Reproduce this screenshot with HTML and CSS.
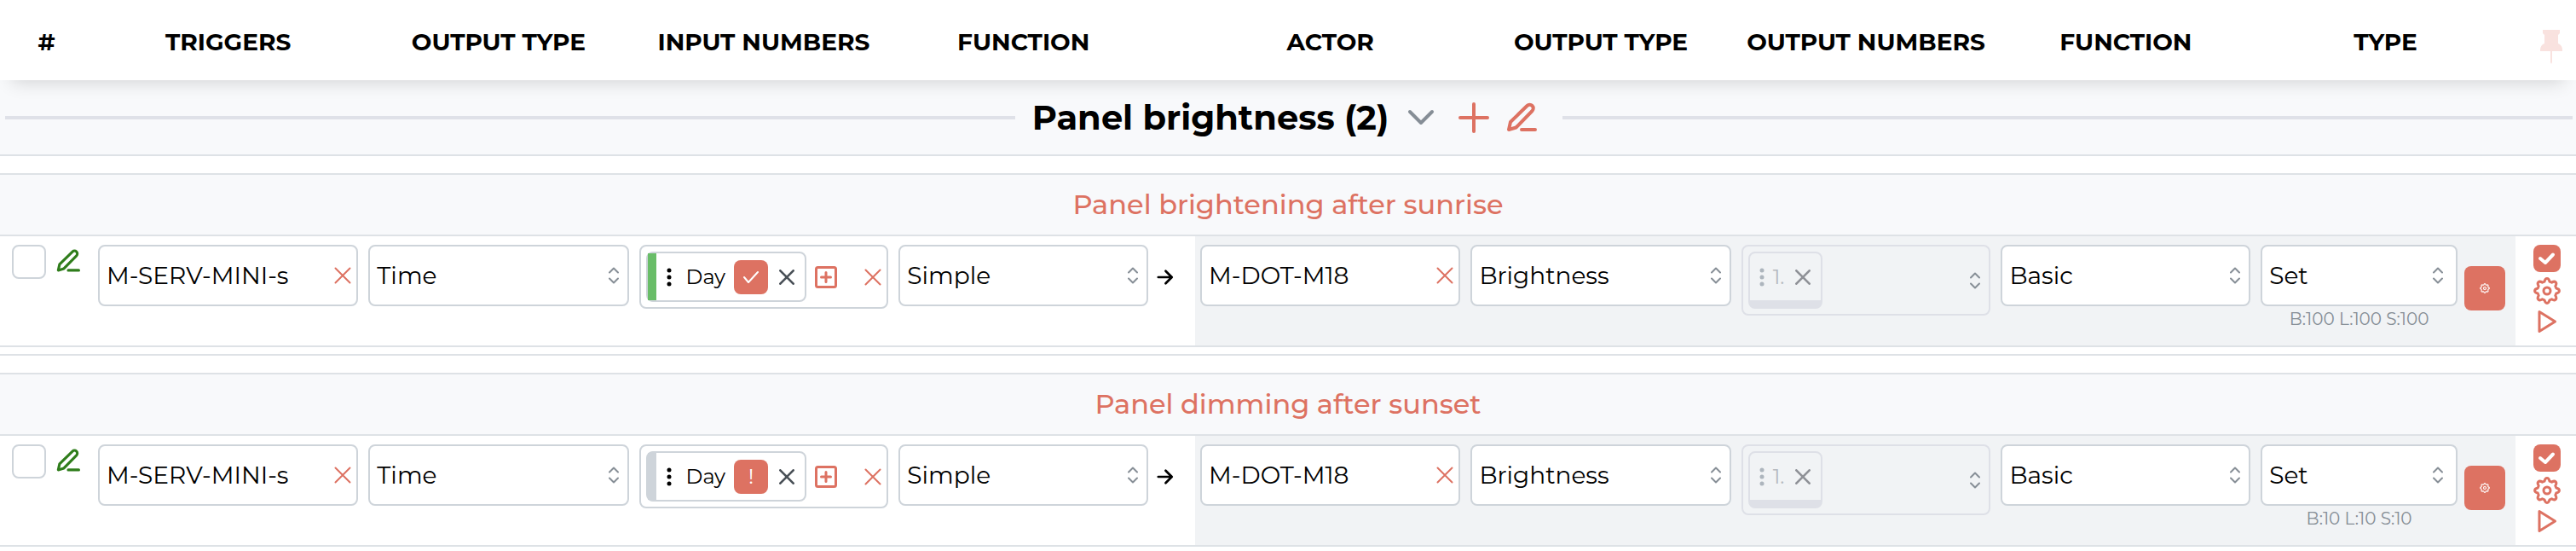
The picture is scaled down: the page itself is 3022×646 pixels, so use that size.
FILE: index.html
```
<!DOCTYPE html>
<html lang="en">
<head>
    <meta charset="UTF-8">
    <meta name="viewport" content="width=device-width, initial-scale=1.0">
    <title>Rules</title>
    <link rel="stylesheet" href="styles.css">
</head>
<body>
    <!-- Shared icons -->
    <svg class="sprite" aria-hidden="true">
        <symbol id="i-pencil" viewBox="0 0 36 36">
            <path d="M3 32l2-9L24.500 4a4.200 4.200 0 0 1 6 6L11.500 29.500z M18 32h16"/>
        </symbol>
        <symbol id="i-x" viewBox="0 0 20 20">
            <path d="M1.500 1.500l17 17M18.500 1.500l-17 17"/>
        </symbol>
        <symbol id="i-updown" viewBox="0 0 14 20">
            <path d="M2 6.500l5-5 5 5M2 13.500l5 5 5-5"/>
        </symbol>
        <symbol id="i-dots" viewBox="0 0 6 22">
            <circle cx="3" cy="3" r="2.500"/><circle cx="3" cy="11" r="2.500"/><circle cx="3" cy="19" r="2.500"/>
        </symbol>
        <symbol id="i-add-box" viewBox="0 0 26 26">
            <rect x="1.500" y="1.500" width="23" height="23" rx="2"/>
            <path d="M13 7.500v11M7.500 13h11"/>
        </symbol>
        <symbol id="i-arrow" viewBox="0 0 22 20">
            <path d="M2 10h17M11.500 2l8 8-8 8"/>
        </symbol>
        <symbol id="i-gear" viewBox="-16 -16 32 32">
            <path d="M-3-10.800C-2-15.600 2-15.600 3-10.800L5.500-9.800C9.600-12.400 12.400-9.600 9.800-5.500L10.800-3C15.600-2 15.600 2 10.800 3L9.800 5.500C12.400 9.600 9.600 12.400 5.500 9.800L3 10.800C2 15.600-2 15.600-3 10.800L-5.500 9.800C-9.600 12.400-12.400 9.600-9.800 5.500L-10.800 3C-15.600 2-15.600-2-10.800-3L-9.800-5.500C-12.400-9.600-9.600-12.400-5.500-9.800z"/>
            <circle r="4"/>
        </symbol>
        <symbol id="i-play" viewBox="0 0 32 28">
            <path d="M7 2.500v23L25.500 14z"/>
        </symbol>
    </svg>

    <table class="rules">
        <colgroup>
            <col class="col-num">
            <col class="col-wide">
            <col class="col-wide">
            <col>
            <col>
            <col class="col-arrow">
            <col class="col-wide">
            <col class="col-wide">
            <col>
            <col>
            <col>
            <col class="col-actions">
        </colgroup>
        <thead>
            <tr>
                <th>#</th>
                <th>TRIGGERS</th>
                <th>OUTPUT TYPE</th>
                <th>INPUT NUMBERS</th>
                <th>FUNCTION</th>
                <th></th>
                <th>ACTOR</th>
                <th>OUTPUT TYPE</th>
                <th>OUTPUT NUMBERS</th>
                <th>FUNCTION</th>
                <th>TYPE</th>
                <th class="pin-cell">
                    <button class="icon-btn pin" aria-label="Pin header">
                        <svg width="26" height="40" viewBox="0 0 26 40"><path d="M3 0h20v4l-2 2v10c3 1 5 4 5 7.500v1.500H0v-1.500C0 20 2 17 5 16V6L3 4z M12 25h2v13l-1 2-1-2z"/></svg>
                    </button>
                </th>
            </tr>
        </thead>
        <tbody>
            <tr class="group-row">
                <td colspan="12">
                    <div class="group">
                        <span class="line"></span>
                        <h2 class="group-title">Panel brightness (2)</h2>
                        <button class="icon-btn group-toggle" aria-label="Collapse group">
                            <svg width="32" height="20" viewBox="0 0 32 20"><path d="M3 3l13 13L29 3"/></svg>
                        </button>
                        <button class="icon-btn group-add" aria-label="Add rule">
                            <svg width="36" height="36" viewBox="0 0 36 36"><path d="M18 2v32M2 18h32"/></svg>
                        </button>
                        <button class="icon-btn group-edit" aria-label="Edit group">
                            <svg class="icon" width="36" height="36"><use href="#i-pencil"/></svg>
                        </button>
                        <span class="line"></span>
                    </div>
                </td>
            </tr>
            <tr class="spacer"><td colspan="12"></td></tr>

            <!-- Rule 1 -->
            <tr class="title-row"><td colspan="12">Panel brightening after sunrise</td></tr>
            <tr class="rule">
                <td>
                    <div class="select-cell">
                        <input type="checkbox" class="pick" aria-label="Select rule">
                        <button class="icon-btn edit" aria-label="Edit rule"><svg class="icon" width="28" height="28"><use href="#i-pencil"/></svg></button>
                    </div>
                </td>
                <td>
                    <div class="field">
                        <input type="text" value="M-SERV-MINI-s" aria-label="Trigger">
                        <button class="icon-btn clear" aria-label="Clear trigger"><svg class="icon" width="20" height="20"><use href="#i-x"/></svg></button>
                    </div>
                </td>
                <td>
                    <div class="field">
                        <select aria-label="Trigger output type"><option>Time</option></select>
                        <svg class="icon updown"><use href="#i-updown"/></svg>
                    </div>
                </td>
                <td>
                    <div class="multi">
                        <div class="chip">
                            <span class="stripe on"></span>
                            <svg class="dots"><use href="#i-dots"/></svg>
                            <span class="chip-label">Day</span>
                            <button class="chip-state" aria-label="Is day">
                                <svg width="18" height="14" viewBox="0 0 18 14"><path d="M1 7l5 6L17 1"/></svg>
                            </button>
                            <button class="icon-btn chip-x" aria-label="Remove"><svg class="icon" width="18" height="18"><use href="#i-x"/></svg></button>
                        </div>
                        <button class="icon-btn add" aria-label="Add input"><svg class="icon" width="26" height="26"><use href="#i-add-box"/></svg></button>
                        <button class="icon-btn clear" aria-label="Clear inputs"><svg class="icon" width="20" height="20"><use href="#i-x"/></svg></button>
                    </div>
                </td>
                <td>
                    <div class="field">
                        <select aria-label="Trigger function"><option>Simple</option></select>
                        <svg class="icon updown"><use href="#i-updown"/></svg>
                    </div>
                </td>
                <td class="arrow"><div><svg class="icon" width="20" height="20"><use href="#i-arrow"/></svg></div></td>
                <td class="actor">
                    <div class="field">
                        <input type="text" value="M-DOT-M18" aria-label="Actor">
                        <button class="icon-btn clear" aria-label="Clear actor"><svg class="icon" width="20" height="20"><use href="#i-x"/></svg></button>
                    </div>
                </td>
                <td class="actor">
                    <div class="field">
                        <select aria-label="Actor output type"><option>Brightness</option></select>
                        <svg class="icon updown"><use href="#i-updown"/></svg>
                    </div>
                </td>
                <td class="actor">
                    <div class="multi disabled">
                        <div class="chip">
                            <svg class="dots"><use href="#i-dots"/></svg>
                            <span class="chip-label">1.</span>
                            <button class="icon-btn chip-x" aria-label="Remove" disabled><svg class="icon" width="18" height="18"><use href="#i-x"/></svg></button>
                        </div>
                        <svg class="icon updown"><use href="#i-updown"/></svg>
                    </div>
                </td>
                <td class="actor">
                    <div class="field">
                        <select aria-label="Actor function"><option>Basic</option></select>
                        <svg class="icon updown"><use href="#i-updown"/></svg>
                    </div>
                </td>
                <td class="actor">
                    <div class="type">
                        <div class="type-main">
                            <div class="field">
                                <select aria-label="Type"><option>Set</option></select>
                                <svg class="icon updown"><use href="#i-updown"/></svg>
                            </div>
                            <div class="hint">B:100 L:100 S:100</div>
                        </div>
                        <button class="config" aria-label="Configure"><svg class="icon" width="12" height="12"><use href="#i-gear"/></svg></button>
                    </div>
                </td>
                <td>
                    <div class="actions">
                        <input type="checkbox" class="enabled" aria-label="Enabled" checked>
                        <button class="icon-btn" aria-label="Settings"><svg class="icon" width="32" height="32"><use href="#i-gear"/></svg></button>
                        <button class="icon-btn" aria-label="Run"><svg class="icon" width="32" height="28"><use href="#i-play"/></svg></button>
                    </div>
                </td>
            </tr>
            <tr class="spacer small"><td colspan="12"></td></tr>
            <tr class="spacer"><td colspan="12"></td></tr>

            <!-- Rule 2 -->
            <tr class="title-row"><td colspan="12">Panel dimming after sunset</td></tr>
            <tr class="rule">
                <td>
                    <div class="select-cell">
                        <input type="checkbox" class="pick" aria-label="Select rule">
                        <button class="icon-btn edit" aria-label="Edit rule"><svg class="icon" width="28" height="28"><use href="#i-pencil"/></svg></button>
                    </div>
                </td>
                <td>
                    <div class="field">
                        <input type="text" value="M-SERV-MINI-s" aria-label="Trigger">
                        <button class="icon-btn clear" aria-label="Clear trigger"><svg class="icon" width="20" height="20"><use href="#i-x"/></svg></button>
                    </div>
                </td>
                <td>
                    <div class="field">
                        <select aria-label="Trigger output type"><option>Time</option></select>
                        <svg class="icon updown"><use href="#i-updown"/></svg>
                    </div>
                </td>
                <td>
                    <div class="multi">
                        <div class="chip">
                            <span class="stripe"></span>
                            <svg class="dots"><use href="#i-dots"/></svg>
                            <span class="chip-label">Day</span>
                            <button class="chip-state" aria-label="Is not day">!</button>
                            <button class="icon-btn chip-x" aria-label="Remove"><svg class="icon" width="18" height="18"><use href="#i-x"/></svg></button>
                        </div>
                        <button class="icon-btn add" aria-label="Add input"><svg class="icon" width="26" height="26"><use href="#i-add-box"/></svg></button>
                        <button class="icon-btn clear" aria-label="Clear inputs"><svg class="icon" width="20" height="20"><use href="#i-x"/></svg></button>
                    </div>
                </td>
                <td>
                    <div class="field">
                        <select aria-label="Trigger function"><option>Simple</option></select>
                        <svg class="icon updown"><use href="#i-updown"/></svg>
                    </div>
                </td>
                <td class="arrow"><div><svg class="icon" width="20" height="20"><use href="#i-arrow"/></svg></div></td>
                <td class="actor">
                    <div class="field">
                        <input type="text" value="M-DOT-M18" aria-label="Actor">
                        <button class="icon-btn clear" aria-label="Clear actor"><svg class="icon" width="20" height="20"><use href="#i-x"/></svg></button>
                    </div>
                </td>
                <td class="actor">
                    <div class="field">
                        <select aria-label="Actor output type"><option>Brightness</option></select>
                        <svg class="icon updown"><use href="#i-updown"/></svg>
                    </div>
                </td>
                <td class="actor">
                    <div class="multi disabled">
                        <div class="chip">
                            <svg class="dots"><use href="#i-dots"/></svg>
                            <span class="chip-label">1.</span>
                            <button class="icon-btn chip-x" aria-label="Remove" disabled><svg class="icon" width="18" height="18"><use href="#i-x"/></svg></button>
                        </div>
                        <svg class="icon updown"><use href="#i-updown"/></svg>
                    </div>
                </td>
                <td class="actor">
                    <div class="field">
                        <select aria-label="Actor function"><option>Basic</option></select>
                        <svg class="icon updown"><use href="#i-updown"/></svg>
                    </div>
                </td>
                <td class="actor">
                    <div class="type">
                        <div class="type-main">
                            <div class="field">
                                <select aria-label="Type"><option>Set</option></select>
                                <svg class="icon updown"><use href="#i-updown"/></svg>
                            </div>
                            <div class="hint">B:10 L:10 S:10</div>
                        </div>
                        <button class="config" aria-label="Configure"><svg class="icon" width="12" height="12"><use href="#i-gear"/></svg></button>
                    </div>
                </td>
                <td>
                    <div class="actions">
                        <input type="checkbox" class="enabled" aria-label="Enabled" checked>
                        <button class="icon-btn" aria-label="Settings"><svg class="icon" width="32" height="32"><use href="#i-gear"/></svg></button>
                        <button class="icon-btn" aria-label="Run"><svg class="icon" width="32" height="28"><use href="#i-play"/></svg></button>
                    </div>
                </td>
            </tr>
        </tbody>
    </table>
</body>
</html>
```
FILE: styles.css
```
* {
    margin: 0;
    padding: 0;
    box-sizing: border-box;
}

body {
    font-family: Montserrat, Inter, sans-serif;
    font-size: 28px;
    color: #000;
    background: white;
}

button, input, select {
    font: inherit;
    color: inherit;
}

svg {
    display: block;
}

.sprite {
    display: none;
}

.icon {
    fill: none;
    stroke: currentColor;
    stroke-width: 3;
    stroke-linecap: round;
    stroke-linejoin: round;
}

.icon-btn {
    border: none;
    background: none;
    color: #dd7262;
    cursor: pointer;
    flex-shrink: 0;
}

/* Table */
.rules {
    width: 100%;
    table-layout: fixed;
    border-collapse: separate;
    border-spacing: 0;
}

.col-num { width: 109px; }
.col-wide { width: 10.5%; }
.col-arrow { width: 49px; }
.col-actions { width: 71px; }

thead {
    position: sticky;
    top: 0;
    z-index: 1;
    background: white;
    box-shadow: 0 16px 20px -14px rgba(0, 0, 0, 0.16);
}

th {
    height: 94px;
    padding-top: 4px;
    font-weight: 700;
    white-space: nowrap;
}

.pin-cell {
    padding: 16px 0 0 12px;
}

.pin {
    vertical-align: middle;
    fill: #f9e2df;
}

td {
    border-bottom: 2px solid #dee2e6;
}

.group-row td {
    height: 89px;
    padding: 0 4px 0 6px;
    background: #f8f9fb;
}

.group {
    display: flex;
    align-items: center;
}

.line {
    flex: 1;
    height: 4px;
    background: #dfe1e8;
}

.group-title {
    margin: 0 22px 0 20px;
    font-size: 40px;
    font-weight: 700;
    line-height: 48px;
}

.group-toggle {
    stroke: #868e96;
    stroke-width: 4;
    stroke-linecap: round;
    stroke-linejoin: round;
    fill: none;
}

.group-add {
    margin: 0 20px 0 28px;
    stroke: #dd7262;
    stroke-width: 4;
    stroke-linecap: round;
}

.group-edit {
    margin-right: 30px;
}

.group-edit .icon,
.edit .icon {
    stroke-width: 4;
}

.spacer td {
    height: 22px;
}

.spacer.small td {
    height: 10px;
}

.title-row td {
    height: 72px;
    padding-bottom: 2px;
    background: #f8f9fb;
    color: #dd7262;
    font-size: 32px;
    font-weight: 500;
    text-align: center;
}

.rule td {
    height: 130px;
    padding: 10px 6px 0;
    vertical-align: top;
}

.rule .actor {
    background: #f1f3f5;
}

/* Leading cell */
.select-cell {
    display: flex;
    gap: 12px;
    padding-left: 8px;
}

.pick {
    appearance: none;
    width: 40px;
    height: 40px;
    border: 2px solid #ced4da;
    border-radius: 8px;
    background: white;
}

.edit {
    height: 38px;
    color: #2f7d1b;
}

/* Fields */
.field {
    position: relative;
    display: flex;
    align-items: center;
    height: 72px;
    border: 2px solid #ced4da;
    border-radius: 8px;
    background: white;
}

.field input,
.field select {
    appearance: none;
    flex: 1;
    min-width: 0;
    height: 100%;
    padding-left: 8px;
    border: none;
    background: none;
    outline: none;
}

.clear {
    margin-right: 6px;
}

.clear .icon {
    stroke-width: 2;
}

.updown {
    position: absolute;
    top: 50%;
    right: 9px;
    width: 14px;
    height: 20px;
    margin-top: -10px;
    color: #868e96;
    stroke-width: 2;
    pointer-events: none;
}

.multi {
    position: relative;
    display: flex;
    align-items: center;
    padding: 6px 0 6px 6px;
    border: 2px solid #ced4da;
    border-radius: 8px;
    background: white;
}

.multi .clear {
    margin-left: auto;
}

.chip {
    display: flex;
    align-items: center;
    height: 59px;
    padding-right: 12px;
    border: 2px solid #ced4da;
    border-radius: 8px;
    font-size: 24px;
}

.stripe {
    align-self: stretch;
    width: 10px;
    background: #ced4da;
}

.stripe.on {
    background: #69bd68;
}

.dots {
    width: 6px;
    height: 22px;
    margin: 0 17px 0 12px;
}

.chip-state {
    display: flex;
    align-items: center;
    justify-content: center;
    width: 40px;
    height: 40px;
    margin: 0 13px 0 10px;
    border: none;
    border-radius: 8px;
    background: #dd7262;
    color: white;
    fill: none;
    stroke: white;
    stroke-width: 2;
    stroke-linecap: round;
    stroke-linejoin: round;
}

.chip-x {
    color: #495057;
}

.chip-x .icon {
    stroke-width: 3;
}

.add {
    margin-left: 10px;
}

.disabled {
    border-color: #dee0e7;
    background: none;
}

.disabled .chip {
    height: 67px;
    border-color: #dee0e7;
    border-bottom-width: 10px;
    color: #b5b9be;
}

.disabled .dots {
    margin: 0 10px 0 11px;
    fill: #adb5bd;
}

.disabled .chip-x {
    margin-left: 13px;
    color: #8f9197;
}

/* Type cell */
.type {
    display: flex;
    align-items: center;
    gap: 8px;
    padding-right: 6px;
}

.type-main {
    flex: 1;
    min-width: 0;
}

.type-main .updown {
    right: 14px;
}

.hint {
    color: #868e96;
    font-size: 20px;
    line-height: 30px;
    text-align: center;
}

.config {
    display: flex;
    align-items: center;
    justify-content: center;
    width: 48px;
    height: 52px;
    border: none;
    border-radius: 8px;
    background: #dd7262;
    color: white;
}

/* Trailing and arrow cells */
.rule .arrow {
    padding-left: 4px;
}

.arrow div {
    display: flex;
    align-items: center;
    height: 76px;
}

.actions {
    display: flex;
    flex-direction: column;
    align-items: center;
    gap: 6px;
    padding-left: 2px;
}

.enabled {
    appearance: none;
    width: 32px;
    height: 32px;
    border-radius: 8px;
    background: #dd7262 url("data:image/svg+xml,%3Csvg xmlns='http://www.w3.org/2000/svg' viewBox='0 0 32 32' fill='none' stroke='white' stroke-width='4' stroke-linecap='round' stroke-linejoin='round'%3E%3Cpath d='M8 16l6 5 9-9.500'/%3E%3C/svg%3E");
}
```
